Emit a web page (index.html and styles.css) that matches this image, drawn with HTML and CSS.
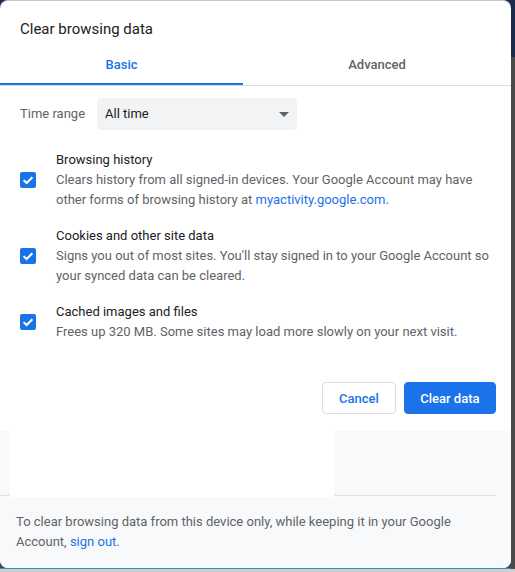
FILE: index.html
```html
<!DOCTYPE html>
<html>
<head>
<meta charset="utf-8">
<link rel="stylesheet" href="styles.css">
</head>
<body>
<div class="stage">
  <div class="dialog">
    <div class="title">Clear browsing data</div>
    <div class="tabs">
      <div class="tab tab-basic active">Basic</div>
      <div class="tab tab-adv">Advanced</div>
    </div>
    <div class="body">
      <div class="time-row">
        <span class="label">Time range</span>
        <div class="select"><span>All time</span><span class="arrow"></span></div>
      </div>
      <div class="items">
        <div class="item">
          <span class="check"><svg width="16" height="16" viewBox="0 0 16 16"><path d="M3.6 8.1 L6.6 11 L12.4 5.2" fill="none" stroke="#fff" stroke-width="2"/></svg></span>
          <div class="item-text">
            <div class="item-title">Browsing history</div>
            <div class="item-desc">Clears history from all signed-in devices. Your Google Account may have other forms of browsing history at <a class="link">myactivity.google.com</a>.</div>
          </div>
        </div>
        <div class="item">
          <span class="check"><svg width="16" height="16" viewBox="0 0 16 16"><path d="M3.6 8.1 L6.6 11 L12.4 5.2" fill="none" stroke="#fff" stroke-width="2"/></svg></span>
          <div class="item-text">
            <div class="item-title">Cookies and other site data</div>
            <div class="item-desc">Signs you out of most sites. You'll stay signed in to your Google Account so your synced data can be cleared.</div>
          </div>
        </div>
        <div class="item">
          <span class="check"><svg width="16" height="16" viewBox="0 0 16 16"><path d="M3.6 8.1 L6.6 11 L12.4 5.2" fill="none" stroke="#fff" stroke-width="2"/></svg></span>
          <div class="item-text">
            <div class="item-title">Cached images and files</div>
            <div class="item-desc">Frees up 320 MB. Some sites may load more slowly on your next visit.</div>
          </div>
        </div>
      </div>
      <div class="buttons">
        <button class="btn btn-cancel">Cancel</button>
        <button class="btn btn-action">Clear data</button>
      </div>
    </div>
    <div class="lower">
      <div class="blank-row"><div class="blank"></div></div>
      <div class="footer">To clear browsing data from this device only, while keeping it in your Google Account, <a class="link">sign out</a>.</div>
    </div>
  </div>
  <div class="edge"></div>
  <div class="taskbar"></div>
</div>
</body>
</html>
```

FILE: styles.css
```css
html, body {
  margin: 0;
  padding: 0;
}
body {
  width: 515px;
  height: 572px;
  overflow: hidden;
  background: linear-gradient(#1c2b4e 0 57px, #4a4a4a 57px);
  font-family: Roboto, "Liberation Sans", sans-serif;
  font-size: 13px;
  line-height: 20px;
  color: #202124;
}
.stage {
  display: flex;
  flex-direction: column;
}
.dialog {
  width: 511px;
  height: 568px;
  box-sizing: border-box;
  border-top: 1px solid #c9c9c9;
  border-radius: 8px;
  background: #fff;
  overflow: hidden;
  display: flex;
  flex-direction: column;
}
.title {
  padding: 18px 20px 0;
  font-size: 15px;
  line-height: 20px;
  color: #202124;
}
.tabs {
  display: flex;
  border-bottom: 1px solid #dadce0;
}
.tab {
  padding: 16px 0 8px;
  text-align: center;
  font-weight: 500;
  color: #5f6368;
  border-bottom: 2px solid transparent;
}
.tab-basic {
  width: 243px;
}
.tab-adv {
  flex: 1;
}
.tab.active {
  color: #1a73e8;
  border-bottom-color: #1a73e8;
}
.body {
  padding: 12px 15px 16px 20px;
}
.time-row {
  display: flex;
  align-items: center;
}
.label {
  width: 77px;
  color: #5f6368;
}
.select {
  width: 200px;
  height: 32px;
  box-sizing: border-box;
  padding: 0 8px;
  background: #f1f3f4;
  border-radius: 4px;
  display: flex;
  align-items: center;
  justify-content: space-between;
}
.arrow {
  width: 0;
  height: 0;
  border-left: 5px solid transparent;
  border-right: 5px solid transparent;
  border-top: 5px solid #5f6368;
}
.items {
  padding-top: 20px;
  display: flex;
  flex-direction: column;
  gap: 16px;
}
.item {
  display: flex;
  align-items: center;
  gap: 20px;
}
.check {
  flex: none;
  width: 16px;
  height: 16px;
  background: #1a73e8;
  border-radius: 2px;
  display: flex;
}
.item-text {
  flex: 1;
}
.item-title {
  color: #202124;
}
.item-desc {
  color: #5f6368;
}
.link {
  color: #1a73e8;
  text-decoration: none;
}
.buttons {
  margin-top: 40px;
  display: flex;
  justify-content: flex-end;
  gap: 8px;
}
.btn {
  height: 32px;
  box-sizing: border-box;
  border-radius: 4px;
  font-family: Roboto, "Liberation Sans", sans-serif;
  font-size: 13px;
  font-weight: 500;
  padding: 0 16px;
}
.btn-cancel {
  background: #fff;
  color: #1a73e8;
  border: 1px solid #dadce0;
}
.btn-action {
  background: #1a73e8;
  color: #fff;
  border: 1px solid #1a73e8;
  padding: 0 15.5px;
}
.lower {
  flex: 1;
  margin-top: 1px;
  background: #f8f9fa;
}
.blank-row {
  height: 64px;
  margin-right: 15px;
  border-bottom: 1px solid #e3e3e3;
}
.blank {
  margin-left: 10px;
  width: 324px;
  height: 66px;
  background: #fff;
}
.footer {
  padding: 16px 16px 0;
  color: #5f6368;
}
.edge {
  width: 511px;
  height: 1px;
  background: #2a8fd6;
}
.taskbar {
  height: 3px;
  background: #cfcfcf;
}
```
